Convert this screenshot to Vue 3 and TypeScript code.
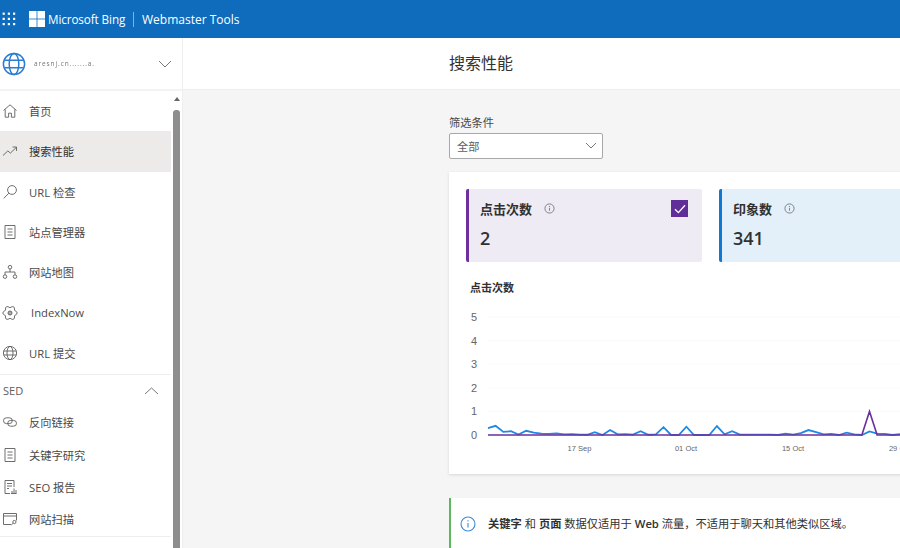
<script setup lang="ts">
const navItems = [
  { label: '首页', icon: 'home' },
  { label: '搜索性能', icon: 'trend', active: true },
  { label: 'URL 检查', icon: 'search' },
  { label: '站点管理器', icon: 'list' },
  { label: '网站地图', icon: 'tree' },
  { label: 'IndexNow', icon: 'gear', indent: true },
  { label: 'URL 提交', icon: 'globe' },
];
const seoItems = [
  { label: '反向链接', icon: 'link' },
  { label: '关键字研究', icon: 'list' },
  { label: 'SEO 报告', icon: 'report' },
  { label: '网站扫描', icon: 'scan' },
];

// chart data, one value per day
const impressions = [
  0.29, 0.39, 0.13, 0.16, 0.02, 0.18, 0.1, 0.06, 0.05, 0.07, 0.03, 0.04, 0.02, 0.01, 0.12, 0, 0.21, 0.03, 0.04, 0.02,
  0.16, 0.01, 0.03, 0.33, 0, 0, 0.35, 0, 0, 0, 0.38, 0.03, 0.16, 0.02, 0.02, 0.02, 0.02, 0.02, 0, 0.06, 0.02, 0.08,
  0.21, 0.12, 0.03, 0.05, 0, 0.1, 0.03, 0, 0.15, 0.06, 0.05, 0, 0.04,
];
const clicks = impressions.map((_, i) => (i === 50 ? 1 : 0));
const yAxis = [0, 1, 2, 3, 4, 5];
const xAxis = [
  { label: '17 Sep', x: 579.5 },
  { label: '01 Oct', x: 686 },
  { label: '15 Oct', x: 793 },
  { label: '29 Oct', x: 900 },
];

const toY = (v: number) => 435 - v * 23.6;
const toPoints = (list: number[]) => list.map((v, i) => `${488 + i * 7.63},${toY(v)}`).join(' ');
</script>

<template>
  <div class="page">
    <header class="topbar">
      <svg class="waffle" width="14" height="14" viewBox="0 0 14 14" fill="#fff">
        <template v-for="r in 3" :key="r">
          <rect v-for="c in 3" :key="c" :x="(c - 1) * 5.2 + 0.6" :y="(r - 1) * 5.2 + 0.6" width="2.2" height="2.2" />
        </template>
      </svg>
      <svg class="logo" width="16" height="16" viewBox="0 0 16 16" fill="#fff">
        <rect width="7.6" height="7.6" />
        <rect x="8.4" width="7.6" height="7.6" />
        <rect y="8.4" width="7.6" height="7.6" />
        <rect x="8.4" y="8.4" width="7.6" height="7.6" />
      </svg>
      <span class="brand">Microsoft Bing</span>
      <span class="bar-divider"></span>
      <span class="product">Webmaster Tools</span>
    </header>

    <div class="body">
      <aside class="sidebar">
        <div class="account">
          <svg width="24" height="24" viewBox="0 0 24 24" fill="none" stroke="#2b7cd3" stroke-width="1.5">
            <circle cx="12" cy="12" r="10.6" />
            <ellipse cx="12" cy="12" rx="4.8" ry="10.6" />
            <path d="M2.2 8.2h19.6M2.2 15.8h19.6" />
          </svg>
          <span class="site-name">aresnj.cn.......a.</span>
          <svg class="account-chevron" width="14" height="8" viewBox="0 0 14 8" fill="none" stroke="#777" stroke-width="1">
            <path d="M1 1l6 6 6-6" />
          </svg>
        </div>

        <div class="side-scroll">
          <nav class="nav">
            <a v-for="item in navItems" :key="item.label" :class="['nav-item', { active: item.active }]">
              <svg class="nav-icon" width="16" height="16" viewBox="0 0 16 16" fill="none" stroke="#5f5e5c" stroke-width="0.9">
                <path v-if="item.icon === 'home'" d="M1.5 7.5L8 1.8l6.5 5.7M3.2 6.4v7.8h3.4v-4h2.8v4h3.4V6.4" />
                <path v-else-if="item.icon === 'trend'" d="M1 12.5l4.8-4.6 2.6 2.2 5.8-5.6M10.6 4h3.9v3.9" />
                <g v-else-if="item.icon === 'search'">
                  <circle cx="10" cy="6" r="4.4" />
                  <path d="M6.8 9.2L1.8 14.4" />
                </g>
                <path v-else-if="item.icon === 'list'" d="M3 1.5h10v13H3zM5.5 5h5M5.5 8h5M5.5 11h5" />
                <g v-else-if="item.icon === 'tree'">
                  <circle cx="8" cy="3.2" r="1.8" />
                  <circle cx="3" cy="12.6" r="1.8" />
                  <circle cx="13" cy="12.6" r="1.8" />
                  <path d="M8 5v3M3 10.8V8h10v2.8" />
                </g>
                <g v-else-if="item.icon === 'gear'">
                  <path d="M12.59 5.35Q17.8 8 12.59 10.65 12.9 16.49 8 13.3 3.1 16.49 3.41 10.65-1.8 8 3.41 5.35 3.1-.49 8 2.7 12.9-.49 12.59 5.35z" />
                  <circle cx="8" cy="8" r="2" fill="#aaa" />
                </g>
                <g v-else>
                  <circle cx="8" cy="8" r="6.6" />
                  <ellipse cx="8" cy="8" rx="3" ry="6.6" />
                  <path d="M1.6 6h12.8M1.6 10h12.8" />
                </g>
              </svg>
              <span :class="{ indent: item.indent }">{{ item.label }}</span>
            </a>

            <div class="section">
              <span>SED</span>
              <svg width="15" height="8" viewBox="0 0 15 8" fill="none" stroke="#777" stroke-width="1">
                <path d="M1 7l6.5-6 6.5 6" />
              </svg>
            </div>
            <a v-for="item in seoItems" :key="item.label" class="nav-item small">
              <svg class="nav-icon" width="16" height="16" viewBox="0 0 16 16" fill="none" stroke="#5f5e5c" stroke-width="0.9">
                <g v-if="item.icon === 'link'">
                  <rect x="1.5" y="3.8" width="8.8" height="5.8" rx="2.9" />
                  <rect x="5.7" y="6.4" width="8.8" height="5.8" rx="2.9" />
                </g>
                <path v-else-if="item.icon === 'list'" d="M3 1.5h10v13H3zM5.5 5h5M5.5 8h5M5.5 11h5" />
                <g v-else-if="item.icon === 'report'">
                  <path d="M8 14.5H3v-13h9v6.5M5 4.5h5M5 7h5M5 9.5h2" />
                  <path d="M9 14.5h5.5M10 14.5v-2.5M12 14.5V9.5M14 14.5v-3.5" />
                </g>
                <g v-else>
                  <path d="M9 13.5H1.5v-11h13v7M1.5 5h13" />
                  <circle cx="12.4" cy="11" r="1.6" />
                  <path d="M11.2 12.2l-2 1.8" />
                </g>
              </svg>
              <span>{{ item.label }}</span>
            </a>
          </nav>
          <div class="scrollbar">
            <span class="arrow"></span>
            <span class="thumb"></span>
          </div>
        </div>
      </aside>

      <main class="main">
        <div class="title-bar">搜索性能</div>
        <div class="content">
          <label class="filter-label">筛选条件</label>
          <div class="select">
            <span>全部</span>
            <svg width="12" height="7" viewBox="0 0 12 7" fill="none" stroke="#777" stroke-width="1">
              <path d="M1 1l5 5 5-5" />
            </svg>
          </div>

          <section class="card">
            <div class="tiles">
              <div class="tile purple">
                <div class="tile-head">
                  <span class="tile-title">点击次数</span>
                  <svg class="tile-info" width="11" height="11" viewBox="0 0 11 11" fill="none" stroke="#777" stroke-width="0.9">
                    <circle cx="5.5" cy="5.5" r="4.6" />
                    <path d="M5.5 4.8v3M5.5 3v1" />
                  </svg>
                  <span class="check">
                    <svg width="12" height="10" viewBox="0 0 12 10" fill="none" stroke="#fff" stroke-width="1.3">
                      <path d="M1 5.2l3.4 3.4L11 1.2" />
                    </svg>
                  </span>
                </div>
                <div class="tile-value">2</div>
              </div>
              <div class="tile blue">
                <div class="tile-head">
                  <span class="tile-title">印象数</span>
                  <svg class="tile-info" width="11" height="11" viewBox="0 0 11 11" fill="none" stroke="#777" stroke-width="0.9">
                    <circle cx="5.5" cy="5.5" r="4.6" />
                    <path d="M5.5 4.8v3M5.5 3v1" />
                  </svg>
                </div>
                <div class="tile-value">341</div>
              </div>
            </div>

            <h3 class="chart-title">点击次数</h3>
            <svg class="chart" width="434" height="160" viewBox="466 300 434 160">
              <line v-for="v in yAxis.slice(1)" :key="v" x1="488" x2="900" :y1="toY(v)" :y2="toY(v)" stroke="#f9f9f9" />
              <text v-for="v in yAxis" :key="v" class="y-tick" x="474" :y="toY(v) + 4">{{ v }}</text>
              <text v-for="t in xAxis" :key="t.label" class="x-tick" :x="t.x" y="451">{{ t.label }}</text>
              <polyline :points="toPoints(impressions)" fill="none" stroke="#1e88e5" stroke-width="1.8" />
              <polyline :points="toPoints(clicks)" fill="none" stroke="#6b2fa0" stroke-width="1.6" />
            </svg>
          </section>

          <section class="notice">
            <svg width="16" height="16" viewBox="0 0 16 16" fill="none" stroke="#3a8ad6" stroke-width="1.1">
              <circle cx="8" cy="8" r="7" />
              <path d="M8 7v4.6M8 4.2v1.4" />
            </svg>
            <p><b>关键字</b> 和 <b>页面</b> 数据仅适用于 <b>Web</b> 流量，不适用于聊天和其他类似区域。</p>
          </section>
        </div>
      </main>
    </div>
  </div>
</template>

<style>
html,
body {
  margin: 0;
  overflow: hidden;
}
</style>

<style scoped>
.page {
  width: 900px;
  height: 548px;
  display: flex;
  flex-direction: column;
  overflow: hidden;
  font-family: "Open Sans", "Noto Sans CJK SC", sans-serif;
  color: #323130;
}
.topbar {
  height: 38px;
  flex-shrink: 0;
  background: #0f6cbd;
  color: #fff;
  display: flex;
  align-items: center;
  padding-left: 2px;
}
.waffle {
  margin-right: 13px;
}
.logo {
  margin-right: 3px;
}
.brand {
  font-size: 11.7px;
  letter-spacing: -0.1px;
  width: 85px;
  white-space: nowrap;
}
.bar-divider {
  width: 1px;
  height: 15px;
  background: #7fb2e0;
  margin-right: 8px;
}
.product {
  font-size: 12px;
  font-weight: 500;
  white-space: nowrap;
}
.body {
  flex: 1;
  display: flex;
  min-height: 0;
}
.sidebar {
  width: 183px;
  flex-shrink: 0;
  box-sizing: border-box;
  border-right: 1px solid #eeeeee;
  background: #fff;
  display: flex;
  flex-direction: column;
}
.account {
  height: 53px;
  flex-shrink: 0;
  box-sizing: border-box;
  border-bottom: 2px solid #f3f3f3;
  display: flex;
  align-items: center;
  padding-left: 2px;
}
.site-name {
  margin-left: 8px;
  width: 124px;
  font-size: 6.5px;
  letter-spacing: 0.9px;
  color: #777;
  filter: blur(0.4px);
  white-space: nowrap;
}
.side-scroll {
  flex: 1;
  display: flex;
  min-height: 0;
}
.nav {
  width: 171px;
  flex-shrink: 0;
}
.nav-item {
  height: 40.3px;
  display: flex;
  align-items: center;
  font-size: 11.25px;
  color: #4a4948;
}
.nav-item.active {
  background: #edebe9;
  color: #323130;
}
.nav-item.small {
  height: 32.4px;
}
.nav-icon {
  margin-left: 2px;
  margin-right: 11px;
  flex-shrink: 0;
}
.indent {
  margin-left: 2px;
}
.section {
  height: 32px;
  margin-top: 1px;
  box-sizing: border-box;
  border-top: 1px solid #eeeeee;
  display: flex;
  align-items: center;
  justify-content: space-between;
  padding: 0 12px 0 3px;
  font-size: 11px;
  color: #605e5c;
}
.nav-item.small:last-child {
  border-bottom: 1px solid #eeeeee;
}
.scrollbar {
  flex: 1;
  display: flex;
  flex-direction: column;
  align-items: center;
  padding-top: 6px;
}
.arrow {
  width: 0;
  height: 0;
  border-left: 3.5px solid transparent;
  border-right: 3.5px solid transparent;
  border-bottom: 4px solid #666;
  margin-bottom: 9px;
}
.thumb {
  flex: 1;
  width: 7px;
  border-radius: 3px 3px 0 0;
  background: #8e8e8e;
}
.main {
  flex: 1;
  min-width: 0;
  background: #f5f5f5;
  display: flex;
  flex-direction: column;
  overflow: hidden;
}
.title-bar {
  height: 52px;
  flex-shrink: 0;
  box-sizing: border-box;
  background: #fff;
  border-bottom: 1px solid #eeeeee;
  padding-left: 266px;
  font-size: 16px;
  line-height: 50px;
}
.content {
  padding: 25px 0 0 266px;
  width: 800px;
}
.filter-label {
  display: block;
  font-size: 11.25px;
  line-height: 16px;
  color: #4a4948;
}
.select {
  width: 154px;
  height: 26px;
  margin-top: 2px;
  box-sizing: border-box;
  border: 1px solid #a8a8a8;
  border-radius: 2px;
  background: #fff;
  display: flex;
  align-items: center;
  justify-content: space-between;
  padding: 0 5px 1px 7px;
  font-size: 11.25px;
  color: #605e5c;
}
.card {
  margin-top: 13px;
  height: 302px;
  box-sizing: border-box;
  padding: 17px 0 0 17px;
  background: #fff;
  box-shadow: 0 1px 3px rgba(0, 0, 0, 0.12);
}
.tiles {
  display: flex;
  gap: 17px;
}
.tile {
  width: 236px;
  height: 73px;
  flex-shrink: 0;
  box-sizing: border-box;
  padding: 11px 14px 0 11px;
  border-radius: 2px;
}
.tile.purple {
  background: #efebf5;
  border-left: 3px solid #6b2fa0;
}
.tile.blue {
  background: #e3f0fa;
  border-left: 3px solid #0f78d4;
}
.tile-head {
  display: flex;
  align-items: center;
  height: 17px;
}
.tile-title {
  font-size: 13px;
  font-weight: 600;
}
.tile-info {
  margin-left: 12px;
}
.check {
  margin-left: auto;
  width: 17px;
  height: 17px;
  background: #5f2e99;
  display: flex;
  align-items: center;
  justify-content: center;
}
.tile-value {
  margin-top: 9px;
  font-size: 18px;
  line-height: 24px;
  font-weight: 600;
}
.chart-title {
  margin: 18px 0 0 4px;
  font-size: 11px;
  line-height: 16px;
  font-weight: 600;
}
.chart {
  display: block;
  margin-top: 4px;
}
.y-tick {
  font-size: 11px;
  fill: #666;
  text-anchor: middle;
  font-family: "Liberation Sans", sans-serif;
}
.x-tick {
  font-size: 7.5px;
  fill: #666;
  text-anchor: middle;
  font-family: "Liberation Sans", sans-serif;
}
.notice {
  margin-top: 24px;
  height: 60px;
  box-sizing: border-box;
  background: #fff;
  border-left: 2px solid #5cb85c;
  display: flex;
  align-items: flex-start;
  padding: 18px 0 0 9px;
}
.notice p {
  margin: 0 0 0 12px;
  font-size: 11.25px;
  line-height: 16px;
  white-space: nowrap;
}
.notice b {
  font-weight: 600;
}
</style>
